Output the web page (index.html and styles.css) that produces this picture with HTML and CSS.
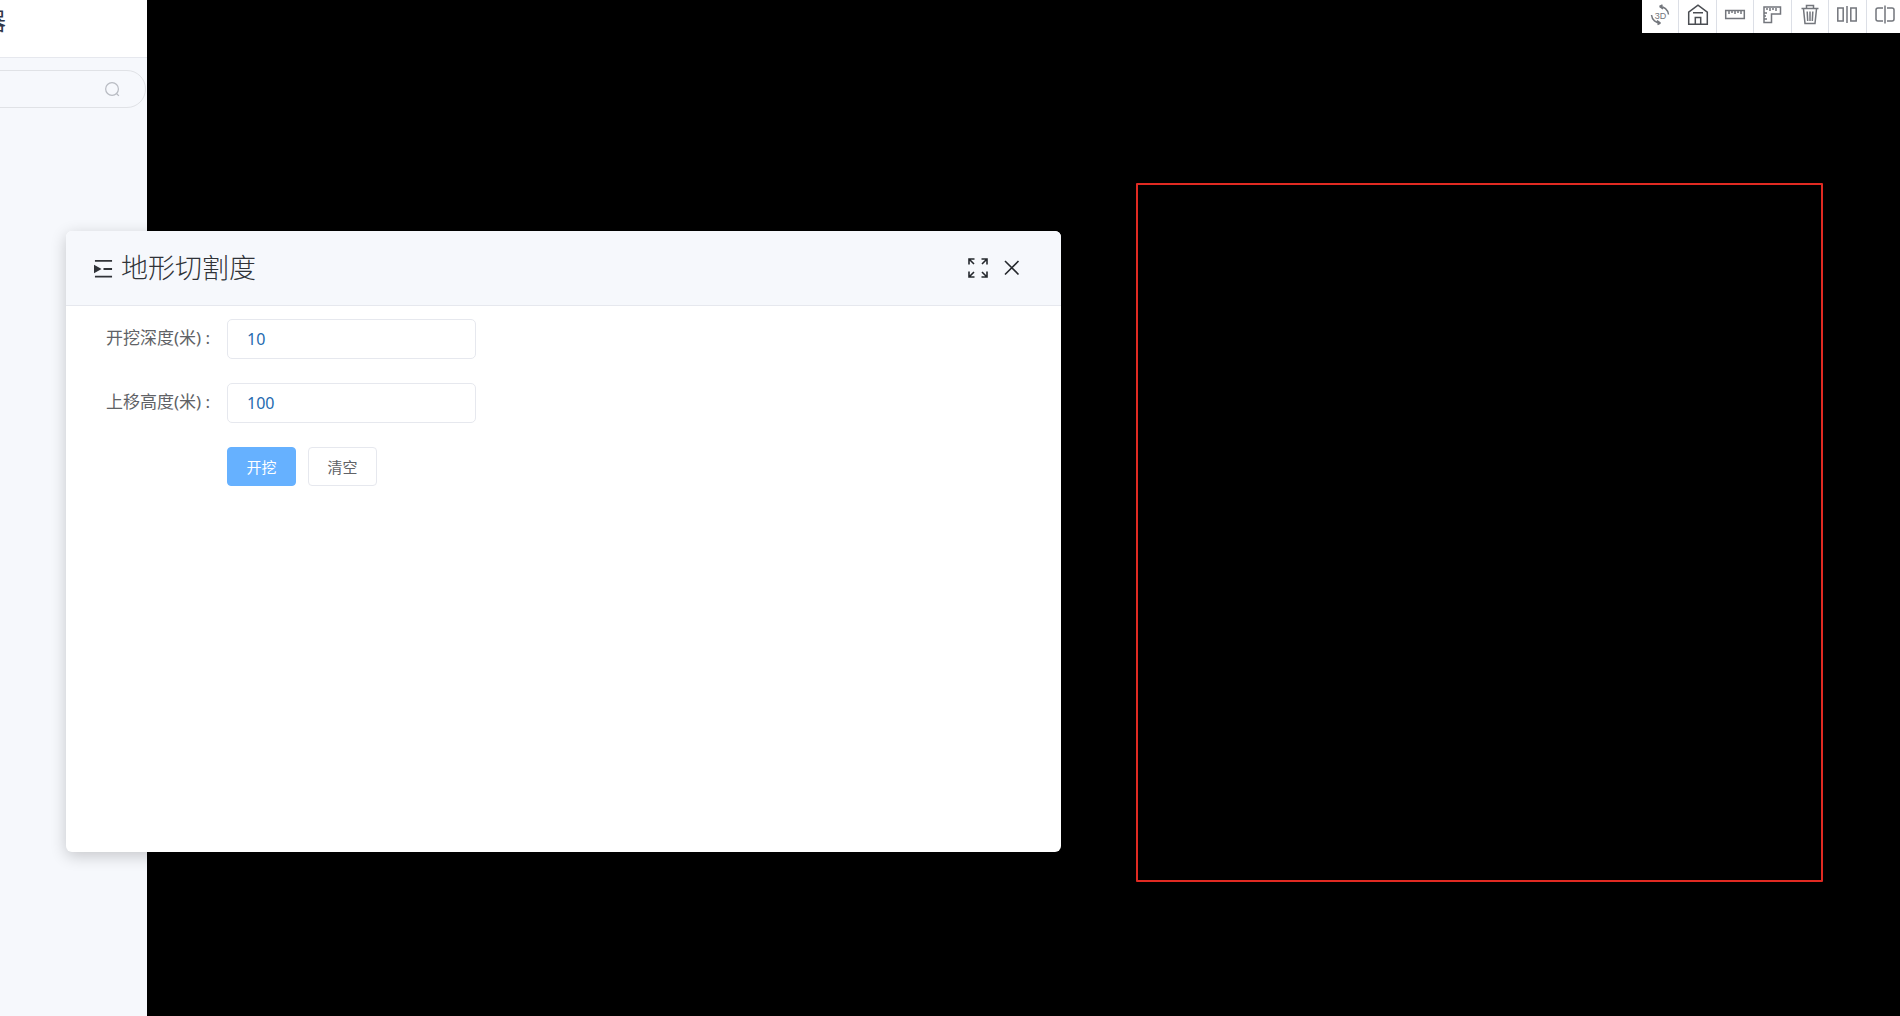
FILE: index.html
```html
<!DOCTYPE html>
<html lang="zh-CN">
<head>
    <meta charset="UTF-8">
    <meta name="viewport" content="width=device-width, initial-scale=1.0">
    <title>地形切割度</title>
    <link rel="stylesheet" href="styles.css">
</head>
<body>
    <!-- Left panel -->
    <aside class="sidebar">
        <div class="sidebar-title">器</div>
        <div class="search">
            <input class="search-input" type="text" aria-label="搜索">
            <svg class="search-icon" viewBox="0 0 16 16"><circle cx="7.5" cy="7.5" r="6.8"/><path d="M12 12l2.800 2.800"/></svg>
        </div>
    </aside>

    <!-- 3D scene -->
    <main class="scene">
        <div class="selection"></div>
    </main>

    <!-- Map tools -->
    <nav class="toolbar">
        <button class="tool" aria-label="3D">
            <svg viewBox="0 0 20 20"><path d="M9.500 1.500c4.500 0 8.500 3 9 8M9.500 1.500l3-1.500M9.500 1.500l3.500 2.500M10.500 18c-4.500 0-8.500-3-9-8M10.500 18l-3 1.500M10.500 18l-3.500-2.500"/><text x="10.5" y="13.5" text-anchor="middle">3D</text></svg>
        </button>
        <button class="tool" aria-label="主页">
            <svg class="dark" viewBox="0 0 20 20"><path d="M.7 7.200L10 .2l9.300 7v12H.7zM5 7.800h10M7.300 19v-6.500h5.400V19"/></svg>
        </button>
        <button class="tool" aria-label="测距">
            <svg viewBox="0 0 20 20"><path d="M.7 5.500h18.600v8H.7zM4 6v3M7 6v2M10 6v3M13 6v2M16 6v3"/></svg>
        </button>
        <button class="tool" aria-label="测量面积">
            <svg viewBox="0 0 20 20"><path d="M2 2h16.500v7H9.500v8.500H2zM5 3v2M8 3v3M11 3v2M14 3v3M2 8h3M2 11h2M2 14h3"/></svg>
        </button>
        <button class="tool" aria-label="清除">
            <svg viewBox="0 0 20 20"><path d="M1.500 3.500h17M6.500 3.500V.5h7v3M3.500 4l1.500 14.500h10L16.500 4M7.200 6.500l.5 9.500M10 6.500V16M12.800 6.500l-.5 9.500"/></svg>
        </button>
        <button class="tool" aria-label="分屏">
            <svg viewBox="0 0 20 20"><path d="M.8 3h5.400v13H.8zM13.800 3h5.400v13h-5.400zM10 1v17"/></svg>
        </button>
        <button class="tool" aria-label="卷帘">
            <svg viewBox="0 0 20 20"><path d="M8 3H3Q1 3 1 5v9q0 2 2 2h5M12 3h5q2 0 2 2v9q0 2-2 2h-5M10 .5v18"/></svg>
        </button>
    </nav>

    <!-- Dialog -->
    <section class="dialog" role="dialog" aria-labelledby="dialog-title">
        <header class="dialog-header">
            <svg class="title-icon" viewBox="0 0 20 20"><path d="M1 2h18M10 10.500h9M1 18.500h18"/><path class="arrow" d="M0 6l8 4.500-8 4.500z"/></svg>
            <h1 id="dialog-title">地形切割度</h1>
            <button class="icon-btn" aria-label="全屏">
                <svg viewBox="0 0 20 20"><path d="M1 6.500V1h5.500M1 1l5 5M13.500 1H19v5.500M19 1l-5 5M1 13.500V19h5.500M1 19l5-5M13.500 19H19v-5.500M19 19l-5-5"/></svg>
            </button>
            <button class="icon-btn" aria-label="关闭">
                <svg viewBox="0 0 20 20"><path d="M3 3l13.500 13.500M16.500 3L3 16.500"/></svg>
            </button>
        </header>
        <form class="dialog-body">
            <label for="depth">开挖深度(米) :</label>
            <input id="depth" class="field" type="text" value="10">
            <label for="height">上移高度(米) :</label>
            <input id="height" class="field" type="text" value="100">
            <div class="actions">
                <button class="btn btn-primary" type="button">开挖</button>
                <button class="btn" type="button">清空</button>
            </div>
        </form>
    </section>
</body>
</html>
```
FILE: styles.css
```css
:root {
    --panel-bg: #f6f8fc;
    --line: #e6e8ee;
    --text-color: #606266;
    --title-color: #303338;
    --primary: #66b1ff;
}

* {
    box-sizing: border-box;
}

body {
    margin: 0;
    min-height: 100vh;
    display: flex;
    overflow: hidden;
    background: #000;
    color: var(--text-color);
    font-family: "Noto Sans", "Noto Sans CJK SC", sans-serif;
}

button {
    padding: 0;
    font-family: inherit;
    cursor: pointer;
}

svg {
    display: block;
    overflow: visible;
    fill: none;
    stroke: currentColor;
}

/* Left panel */
.sidebar {
    width: 147px;
    flex: none;
    background: var(--panel-bg);
}

.sidebar-title {
    height: 58px;
    padding-top: 4px;
    margin-bottom: 12px;
    background: #fff;
    border-bottom: 1px solid var(--line);
    color: #303648;
    font-size: 24px;
    line-height: 34px;
    text-indent: -18px;
}

.search {
    display: flex;
    align-items: center;
    height: 38px;
    margin: 0 1px 0 -60px;
    padding-right: 25px;
    border: 1px solid #e0e2e6;
    border-radius: 19px;
}

.search-input {
    flex: 1;
    min-width: 0;
    border: 0;
    outline: 0;
    background: none;
}

.search-icon {
    width: 15px;
    height: 15px;
    color: #b8bbc2;
    stroke-width: 1.3;
}

/* Scene */
.scene {
    flex: 1;
    position: relative;
}

.selection {
    position: absolute;
    top: 183px;
    right: 77px;
    width: 687px;
    height: 699px;
    border: 2px solid #e02a22;
    border-radius: 1px;
}

/* Map tools */
.toolbar {
    position: absolute;
    top: 0;
    right: -4px;
    width: 262px;
    height: 33px;
    display: flex;
    background: #fff;
}

.tool {
    flex: 1;
    display: flex;
    justify-content: center;
    padding-top: 5px;
    border: 0;
    border-right: 1px solid #dcdfe6;
    background: none;
    color: #73767c;
}

.tool svg {
    width: 20px;
    height: 20px;
    stroke-width: 1.5;
}

.tool .dark {
    color: #4a4d52;
}

.tool text {
    fill: currentColor;
    stroke: none;
    font: 9px "Liberation Sans", sans-serif;
}

/* Dialog */
.dialog {
    position: absolute;
    top: 231px;
    left: 66px;
    width: 995px;
    min-height: 621px;
    overflow: hidden;
    background: #fff;
    border-radius: 6px;
    box-shadow: 0 4px 16px rgba(0, 0, 0, 0.2);
}

.dialog-header {
    display: flex;
    align-items: center;
    height: 75px;
    padding: 0 39px 0 28px;
    background: var(--panel-bg);
    border-bottom: 1px solid var(--line);
    color: var(--title-color);
}

.title-icon {
    width: 19px;
    height: 19px;
    margin-right: 8px;
    stroke-width: 2;
}

.title-icon .arrow {
    fill: currentColor;
    stroke: none;
}

.dialog-header h1 {
    margin: 0 auto 0 0;
    font-size: 27px;
    font-weight: 300;
    line-height: 36px;
}

.icon-btn {
    margin-left: 14px;
    border: 0;
    background: none;
    color: #25282d;
}

.icon-btn svg {
    width: 20px;
    height: 20px;
    stroke-width: 1.6;
}

.dialog-body {
    display: grid;
    grid-template-columns: 108px 249px;
    column-gap: 13px;
    row-gap: 24px;
    padding: 13px 40px;
}

.dialog-body label {
    font-size: 17px;
    line-height: 38px;
    white-space: nowrap;
}

.field {
    height: 40px;
    padding: 0 19px;
    border: 1px solid var(--line);
    border-radius: 5px;
    outline: 0;
    color: #1f6bb0;
    font-family: inherit;
    font-size: 16px;
}

.actions {
    grid-column: 2;
    display: flex;
    gap: 12px;
}

.btn {
    width: 69px;
    height: 39px;
    background: #fff;
    border: 1px solid var(--line);
    border-radius: 4px;
    color: var(--text-color);
    font-size: 15px;
}

.btn-primary {
    background: var(--primary);
    border-color: var(--primary);
    color: #fff;
}
```
